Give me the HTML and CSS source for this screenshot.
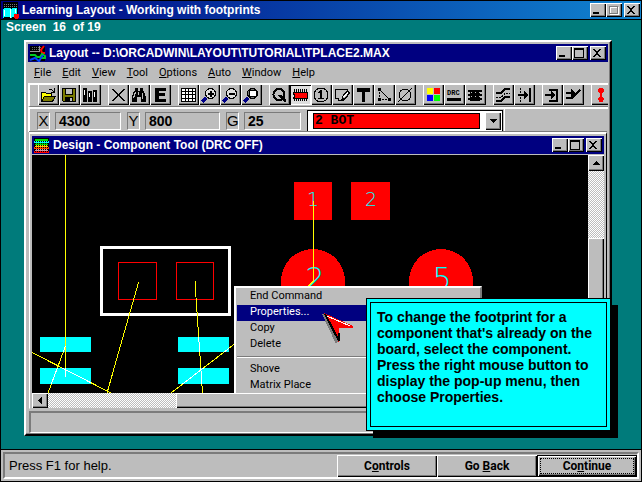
FILE: index.html
```html
<!DOCTYPE html>
<html lang="en">
<head>
<meta charset="utf-8">
<title>Learning Layout - Working with footprints</title>
<link rel="stylesheet" href="styles.css">
</head>
<body>
<main class="lesson">
  <header class="titlebar titlebar-main">
    <svg class="app-icon" width="17" height="17" shape-rendering="crispEdges" aria-hidden="true">
      <path fill="#000" d="M1 0h15v17H1z"/><path stroke="#777" d="M2 2.500h13M2 4.500h13" stroke-dasharray="1 1"/>
      <path fill="#0ff" d="M1 7l2-1h5l1 1v9l-1-1H3l-2 1zM9 7l1-1h5v9h-5l-1 1z"/><path stroke="#fff" d="M8.500 7v9M2.500 8v6M13.500 7v4"/><path fill="#f00" d="M12 12h5v4h-1v1h-3v-1h-1z"/>
    </svg>
    <h1>Learning Layout - Working with footprints</h1>
    <div class="controls">
      <button aria-label="Minimize"><svg width="12" height="10"><path fill="#000" d="M2 7h6v2H2z"/></svg></button>
      <button aria-label="Maximize" disabled><svg width="12" height="10" fill="none" shape-rendering="crispEdges"><path stroke="#fff" d="M3.500 2.500h8v7h-8z"/><path stroke="#7b7b7b" d="M2.500 1.500h8v7h-8z"/></svg></button>
      <button aria-label="Close"><svg width="12" height="10" shape-rendering="crispEdges"><path d="M2 1h2v1h1v1h2V2h1V1h2v1H9v1H8v1H7v2h1v1h1v1h1v1H8V8H7V7H5v1H4v1H2V8h1V7h1V6h1V4H4V3H3V2H2z"/></svg></button>
    </div>
  </header>

  <section class="stage">
    <p class="counter">Screen&nbsp; 16 &nbsp;of 19</p>

    <section class="window">
      <header class="titlebar">
        <svg class="app-icon" width="17" height="17" aria-hidden="true">
          <path fill="#000" d="M1 1h15v15H1z"/><path stroke="#999" d="M1 6.500h9M10.500 1v6"/><path fill="none" stroke="#666" stroke-dasharray="1 1" d="M3 2.500h9M3 4.500h9"/><path fill="none" stroke="#f00" stroke-width="2" d="M15 1l-3 4 1 3h3"/><path fill="none" stroke="#0c2" stroke-width="2" d="M1 10h5l2 2h3l2-3 3 2v2h-4"/><path fill="none" stroke="#04f" stroke-width="2" d="M1 15l5-2 4 3 4-6"/>
        </svg>
        <h2>Layout -- D:\ORCADWIN\LAYOUT\TUTORIAL\TPLACE2.MAX</h2>
        <div class="controls">
          <button aria-label="Minimize"><svg width="12" height="10"><path fill="#000" d="M2 7h6v2H2z"/></svg></button>
          <button aria-label="Maximize"><svg width="12" height="10" shape-rendering="crispEdges"><path fill-rule="evenodd" d="M1 0h10v10H1zM2 2h8v7H2z"/></svg></button>
          <button aria-label="Close"><svg width="12" height="10" shape-rendering="crispEdges"><path d="M2 1h2v1h1v1h2V2h1V1h2v1H9v1H8v1H7v2h1v1h1v1h1v1H8V8H7V7H5v1H4v1H2V8h1V7h1V6h1V4H4V3H3V2H2z"/></svg></button>
        </div>
      </header>

      <nav class="menubar">
        <button><u>F</u>ile</button><button><u>E</u>dit</button><button><u>V</u>iew</button><button><u>T</u>ool</button><button><u>O</u>ptions</button><button><u>A</u>uto</button><button><u>W</u>indow</button><button><u>H</u>elp</button>
      </nav>

      <div class="toolbar">
        <div class="group">
          <button aria-label="Open"><svg><path fill="#7b7b00" d="M2 6h4l1 1h6v3h3l-3 6H2z"/><path fill="#ff0" d="M3 7h3l1 1h5v2H6l-3 5z"/><path fill="none" stroke="#000" d="M2.500 15.500v-9h4l1 1h5v2.500M2.500 15.500l3-5h11l-3 5zM10 3.500h2l3 2M15.500 2v4H12"/></svg></button>
          <button aria-label="Save"><svg><path d="M2 2h14v14H3l-1-1z"/><path fill="#7b7b00" d="M3 3h2v6h8V3h2v12h-2v-4H5v4H3z"/><path fill="#bdbdbd" d="M6 3h6v5H6zM10 12h2v3h-2z"/></svg></button>
          <button aria-label="Library"><svg><path d="M2 2h4v14H2zM7 5h4v11H7zM12 4h4v12h-4z"/><path stroke="#fff" d="M3.500 4v5M8.500 7v4M13.500 6v5"/></svg></button>
        </div>
        <div class="group">
          <button aria-label="Delete"><svg><path d="M2 3h2l5 5 5-5h2l-6 6 6 6h-2l-5-5-5 5H2l6-6z"/></svg></button>
          <button aria-label="Find"><svg><path d="M5 2h3v3h2V2h3v3h1l2 6v5h-5v-5H7v5H2v-5l2-6h1z"/><path stroke="#bdbdbd" d="M5.500 6l-2 6M8.500 6v3M12.500 7v6"/></svg></button>
          <button aria-label="Edit"><svg><path d="M4 2h11v3H8v2h6v3H8v3h7v3H4z"/></svg></button>
        </div>
        <div class="group">
          <button aria-label="Spreadsheet"><svg><path fill="#fff" d="M3 3h13v12H3z"/><path fill="none" stroke="#000" d="M2.500 2.500h14v13h-14zM2 5.500h14M2 8.500h14M2 12.500h14M6.500 2v14M9.500 2v14M13.500 2v14"/></svg></button>
          <button aria-label="Zoom in"><svg><path stroke="#008" stroke-width="3" d="M2 16l4-4"/><circle cx="10.500" cy="7.500" r="5" fill="#ddd" stroke="#000"/><path stroke="#000" stroke-width="2" d="M8 8h6M11 5v6"/></svg></button>
          <button aria-label="Zoom out"><svg><path stroke="#008" stroke-width="3" d="M2 16l4-4"/><circle cx="10.500" cy="7.500" r="5" fill="#ddd" stroke="#000"/><path stroke="#000" stroke-width="2" d="M8 8h6"/></svg></button>
          <button aria-label="Zoom all"><svg><path stroke="#008" stroke-width="3" d="M2 16l4-4"/><circle cx="10.500" cy="7.500" r="5" fill="#777" stroke="#000"/><path fill="#fff" stroke="#000" d="M7.500 4.500h7v6h-7z"/></svg></button>
        </div>
        <div class="group">
          <button aria-label="Query"><svg><circle cx="9" cy="8.500" r="5.500" fill="none" stroke="#000" stroke-width="2"/><path d="M8 9h3l5 5v2h-2z"/></svg></button>
          <button aria-label="Component tool" class="pressed"><svg><path stroke="#000" d="M3.500 3v12M5.500 3v12M7.500 3v12M9.500 3v12M11.500 3v12M13.500 3v12M15.500 3v12"/><path fill="#f00" stroke="#000" d="M2.500 6.500h14v6h-14V11h1V8h-1z"/></svg></button>
          <button aria-label="Pin tool"><svg><circle cx="9" cy="9" r="7" fill="none" stroke="#000"/><path d="M8 4h2v8h2v1H6v-1h2V7H6V6h1z"/></svg></button>
          <button aria-label="Obstacle tool"><svg><path fill="none" stroke="#000" d="M2.500 3.500h12v7l-4 4H5v-2H2.500zM8.500 14l2-5 4-4 2 2-4 5z"/><path fill="#fff" d="M10 11l4-5 1 1-4 5z"/></svg></button>
          <button aria-label="Text tool"><svg><path d="M3 2h13v4h-5v10H8V6H3z"/></svg></button>
          <button aria-label="Connection tool"><svg><path fill="none" stroke="#000" stroke-dasharray="2 1" d="M4.500 3v12M4 13.500h12"/><path stroke="#000" d="M5 4l10 10"/><path d="M3 2h3v3H3zM3 12h3v3H3zM13 12h3v3h-3z"/></svg></button>
          <button aria-label="Error tool"><svg><circle cx="9" cy="9" r="6" fill="none" stroke="#000"/><path stroke="#000" d="M2 16L16 2"/></svg></button>
        </div>
        <div class="group">
          <button aria-label="Colors"><svg><path fill="#ff0" d="M3 2h6v6H3z"/><path fill="#f00" d="M10 2h6v6h-6z"/><path fill="#00f" d="M3 9h6v6H3z"/><path fill="#0f0" d="M10 9h6v6h-6z"/></svg></button>
          <button aria-label="Online DRC"><svg><text x="2" y="9" class="drc">DRC</text><path d="M2 12h14v3H2z"/></svg></button>
          <button aria-label="Reconnect"><svg><path d="M4 4h10v11H4zM2 4h14v2H2zM2 8h14v2H2zM2 12h14v2H2z"/><path stroke="#bdbdbd" stroke-dasharray="1 3" d="M5 6.500h9M5 10.500h9"/></svg></button>
        </div>
        <div class="group">
          <button aria-label="Auto path"><svg><path fill="none" stroke="#000" stroke-width="2" d="M2 7h5l4-4h5M2 15h5l4-4h5"/><path fill="none" stroke="#000" stroke-dasharray="2 1" d="M2 11.500h5l4-4h5"/></svg></button>
          <button aria-label="Shove track"><svg><path stroke="#000" d="M5.500 2v14" stroke-dasharray="2 1"/><path stroke="#000" stroke-width="2" d="M15 2v14M3 9h10"/><path d="M9 5l4 4-4 4z"/></svg></button>
        </div>
        <div class="group">
          <button aria-label="Edit segment"><svg><path fill="none" stroke="#000" stroke-width="2" d="M6 4h8v11H6M2 9h9"/><path d="M8 5l4 4-4 4z"/></svg></button>
          <button aria-label="Add route"><svg><path fill="none" stroke="#000" stroke-width="2" d="M2 12h6l8-8M2 7h8"/><path d="M7 3l4 4-4 4z"/></svg></button>
        </div>
        <div class="group">
          <button aria-label="Refresh"><svg><path fill="#f00" d="M7 2h4v1h1v3h-1v1h-1v4h1v1h1v2h-1v2H7v-2H6v-2h1v-1h1V7H7V6H6V3h1z"/></svg></button>
        </div>
      </div>

      <form class="coords">
        <label for="x">X</label><input id="x" class="field" value="4300">
        <label for="y">Y</label><input id="y" class="field field-y" value="800">
        <label for="g">G</label><input id="g" class="field field-g" value="25">
        <div class="combo">
          <select aria-label="Layer"><option>2 BOT</option></select>
          <span class="arrow"><svg width="7" height="4" shape-rendering="crispEdges"><path d="M0 0h7v1H6v1H5v1H4v1H3V3H2V2H1V1H0z"/></svg></span>
        </div>
        <div class="rest"></div>
      </form>

      <section class="design">
        <header class="titlebar">
          <svg class="app-icon" width="17" height="17" shape-rendering="crispEdges" aria-hidden="true">
            <path fill="#000" d="M1 1h15v15H1z"/>
            <g stroke-width="2"><path stroke="#0d0" d="M2 3h13"/><path stroke="#0ff" d="M1 5h15"/><path stroke="#0d0" d="M2 7h13"/><path stroke="#fc0" d="M2 9h13"/><path stroke="#f40" d="M1 11h15"/><path stroke="#c9a" d="M2 13h13"/><path stroke="#f00" d="M1 15h15"/></g>
            <path stroke="#000" stroke-dasharray="1 1" d="M2 4.500h13M2 6.500h13M2 8.500h13M2 10.500h13M2 12.500h13M2 14.500h13"/>
          </svg>
          <h2>Design - Component Tool (DRC OFF)</h2>
          <div class="controls">
            <button aria-label="Minimize"><svg width="12" height="10"><path fill="#000" d="M2 7h6v2H2z"/></svg></button>
            <button aria-label="Maximize"><svg width="12" height="10" shape-rendering="crispEdges"><path fill-rule="evenodd" d="M1 0h10v10H1zM2 2h8v7H2z"/></svg></button>
            <button aria-label="Close"><svg width="12" height="10" shape-rendering="crispEdges"><path d="M2 1h2v1h1v1h2V2h1V1h2v1H9v1H8v1H7v2h1v1h1v1h1v1H8V8H7V7H5v1H4v1H2V8h1V7h1V6h1V4H4V3H3V2H2z"/></svg></button>
          </div>
        </header>

        <div class="viewport">
          <div class="board">
            <svg class="drawing" shape-rendering="crispEdges">
              <defs><clipPath id="pads"><path d="M40 346h51v6H40zM40 368h51v16H40zM178 337h51v15h-51zM178 368h51v16h-51z"/></clipPath></defs>
              <g transform="translate(-32 -155)">
                <path fill="#f00" d="M294 182h38v38h-38zM351 182h39v38h-39z"/>
                <circle cx="313" cy="281" r="32" fill="#f00"/><circle cx="441" cy="281" r="32" fill="#f00"/>
                <g class="pin"><text x="313" y="206">1</text><text x="371" y="206">2</text></g>
                <g class="pin pin-large"><text x="315" y="289">2</text><text x="442" y="289">5</text></g>
                <path fill="#0ff" d="M40 337h51v15H40zM40 368h51v16H40zM178 337h51v15h-51zM178 368h51v16h-51z"/>
                <path fill="none" stroke="#fff" stroke-width="3" d="M101.500 247.500h128v67h-128z"/>
                <path fill="none" stroke="#f00" d="M118.500 262.500h38v37h-38zM176.500 262.500h37v37h-37z"/>
                <g fill="none">
                  <path stroke="#ff0" d="M65.500 155v222M313.500 201v80l-6 6M138.500 282.500L107 393M195.500 281v9L202.500 393M32 352.500L111 393M65.500 346L48 393M171 393L234.500 344"/>
                  <path stroke="#fff" clip-path="url(#pads)" d="M65.500 368v9M195.500 281v9L202.500 393M32 352.500L111 393M65.500 346L48 393M171 393L234.500 344"/>
                </g>
              </g>
            </svg>
            <menu class="popup">
              <li><button>End Command</button></li>
              <li><button class="selected">Properties...</button></li>
              <li><button>Copy</button></li>
              <li><button>Delete</button></li>
              <li class="separator"></li>
              <li><button>Shove</button></li>
              <li><button>Matrix Place</button></li>
            </menu>
            <svg class="pointer" width="33" height="33" shape-rendering="crispEdges" aria-hidden="true">
              <path fill="#7b7b7b" d="M0 2l3-1 13 28-2 3z"/>
              <path fill="#f00" d="M2 1l29 13v2H17v15z"/>
              <path fill="none" stroke="#000" stroke-width="2" d="M3 2l14 27V21"/>
              <path stroke="#fff" d="M5 4l23 10"/>
            </svg>
          </div>
          <div class="vscroll">
            <span class="arrow"><svg width="7" height="4" shape-rendering="crispEdges"><path d="M3 0h1v1h1v1h1v1h1v1H0V3h1V2h1V1h1z"/></svg></span>
            <span class="thumb"></span>
          </div>
          <div class="hscroll">
            <span class="arrow"><svg width="4" height="7" shape-rendering="crispEdges"><path d="M4 0v7H3V6H2V5H1V4H0V3h1V2h1V1h1V0z"/></svg></span>
            <span class="thumb"></span>
          </div>
        </div>
      </section>
      <div class="window-status"></div>
    </section>

    <aside class="callout"><p>To change the footprint for a component that's already on the board, select the component. Press the right mouse button to display the pop-up menu, then choose Properties.</p></aside>
  </section>

  <footer class="statusbar">
    <div class="status-panel">
      <p>Press F1 for help.</p>
      <button>C<u>o</u>ntrols</button>
      <button>Go <u>B</u>ack</button>
      <button class="default"><span>Co<u>n</u>tinue</span></button>
    </div>
  </footer>
</main>
</body>
</html>
```

FILE: styles.css
```css
:root {
  --face: #bdbdbd;
  --shade: #7b7b7b;
  --teal: #007b7b;
  --navy: #000080;
}

* { box-sizing: border-box; }

body {
  margin: 0;
  font: 12px/16px "Liberation Sans", Arial, sans-serif;
  color: #000;
  background: #000;
}

h1, h2, p, menu { margin: 0; padding: 0; }

button {
  margin: 0;
  padding: 0;
  border: 0;
  border-radius: 0;
  background: var(--face);
  color: #000;
  font: inherit;
}

.lesson {
  display: flex;
  flex-direction: column;
  min-height: 100vh;
  border: 1px solid #000;
}

/* Title bars */
.titlebar {
  display: flex;
  align-items: center;
  flex: none;
  height: 18px;
  padding: 0 2px 0 1px;
  background: var(--navy);
  color: #fff;
}

.titlebar-main {
  padding: 0 1px;
  background: linear-gradient(90deg, #000080, #1084d0);
}

.titlebar h1, .titlebar h2 {
  flex: 1;
  padding-left: 3px;
  font-size: 12px;
  font-weight: bold;
  line-height: 18px;
  white-space: nowrap;
}

.controls { display: flex; }
.controls button, .arrow, .thumb {
  box-shadow: inset 1px 1px #fff, inset -1px -1px #000, inset -2px -2px var(--shade);
  background: var(--face);
}
.controls button { width: 16px; height: 14px; padding: 2px 1px; }
.controls svg { display: block; }
.controls button:last-child { margin-left: 2px; }

/* Lesson area */
.stage {
  position: relative;
  display: flex;
  flex-direction: column;
  flex: 1;
  padding: 0 29px 13px 23px;
  border-top: 1px solid #000;
  background: var(--teal);
}

.counter {
  height: 20px;
  margin-left: -18px;
  color: #fff;
  font-size: 12px;
  font-weight: bold;
  line-height: 14px;
}

.window {
  display: flex;
  flex-direction: column;
  flex: 1;
  padding: 2px 2px 1px;
  border: 2px solid;
  border-color: #fff #000 #000 #fff;
  background: var(--face);
  box-shadow: inset -1px -1px var(--shade);
}

.menubar {
  display: flex;
  gap: 11px;
  height: 21px;
  padding: 0 6px;
}
.menubar button {
  font-family: Roboto, "Liberation Sans", sans-serif;
  font-size: 11px;
}

.toolbar {
  display: flex;
  gap: 7px;
  height: 24px;
  padding: 0 0 0 8px;
  border-top: 2px solid #fff;
  border-left: 2px solid #fff;
  border-bottom: 1px solid var(--shade);
  overflow: hidden;
}
.group { display: flex; flex: none; }
.toolbar button {
  width: 21px;
  height: 20px;
  box-shadow: inset 1px 0 #fff, inset -1px -1px #000, inset -2px -2px var(--shade);
}
.toolbar .pressed { box-shadow: inset 1px 1px #000, inset -1px -1px #fff; background: #dedede; }
.toolbar svg { display: block; width: 18px; height: 18px; margin-left: 1px; shape-rendering: crispEdges; }
.drc { font: bold 7px "Liberation Mono", monospace; }

/* Coordinates and layer */
.coords {
  display: flex;
  align-items: center;
  height: 25px;
  border-top: 2px solid #fff;
  border-left: 2px solid #fff;
  padding-left: 7px;
}
.coords label, .field {
  height: 18px;
  border: 1px solid;
  border-color: var(--shade) #fff #fff var(--shade);
  font: 15px/16px "Liberation Sans", Arial, sans-serif;
}
.coords label { width: 13px; margin-right: 5px; text-align: center; }
.field {
  width: 66px;
  margin-right: 6px;
  padding: 0 3px;
  background: none;
  border-radius: 0;
  font-size: 14px;
  font-weight: bold;
}
.field-y { width: 75px; }
.field-g { width: 57px; }
.combo {
  display: flex;
  align-items: center;
  width: 196px;
  height: 22px;
  padding: 0 1px 0 5px;
  border: 1px solid #000;
  background: #fff;
}
.combo select {
  appearance: none;
  flex: 1;
  height: 16px;
  margin-right: 5px;
  padding: 0 1px;
  border: 1px solid #000;
  border-radius: 0;
  background: #f00;
  color: #000;
  font: bold 13px/14px "Liberation Mono", monospace;
}
.arrow {
  display: flex;
  align-items: center;
  justify-content: center;
  flex: none;
  width: 16px;
  height: 16px;
}
.combo .arrow { height: 18px; }
.rest { flex: 1; align-self: stretch; margin-left: 1px; border-left: 1px solid #fff; }

/* Design window */
.design {
  display: flex;
  flex-direction: column;
  flex: 1;
  margin: 0 1px;
  padding: 2px 2px 0;
  border: 1px solid;
  border-top: 2px solid #fff;
  border-color: #fff #000 var(--face) #fff;
  box-shadow: 0 -1px var(--shade);
}
.viewport {
  display: grid;
  flex: 1;
  grid-template: 1fr 15px / 1fr 16px;
  border-top: 1px solid var(--face);
}
.board {
  position: relative;
  overflow: hidden;
  background: #000;
}
.drawing { position: absolute; width: 100%; height: 100%; }
.pin {
  fill: #0ff;
  font: 200 19px "DejaVu Sans", sans-serif;
  text-anchor: middle;
}
.pin-large { font-size: 30px; }

.vscroll, .hscroll {
  display: flex;
  background: repeating-conic-gradient(#fff 0 25%, var(--face) 0 50%) 0 0 / 2px 2px;
}
.vscroll { flex-direction: column; }
.vscroll .thumb { height: 80px; margin-top: 67px; }
.hscroll .arrow { height: 15px; }
.hscroll .thumb { width: 240px; margin-left: 128px; }

.popup {
  position: absolute;
  left: 202px;
  top: 131px;
  width: 248px;
  padding: 1px 1px 16px;
  border: 2px solid;
  border-color: #fff var(--shade) var(--shade) #fff;
  background: var(--face);
  list-style: none;
}
.popup button {
  display: block;
  width: 100%;
  height: 16px;
  padding: 0 0 2px 13px;
  font: 11px/14px Roboto, "Liberation Sans", sans-serif;
  text-align: left;
}
.popup .selected { background: var(--navy); color: #fff; }
.separator {
  height: 2px;
  margin: 3px 0 4px;
  border-top: 1px solid var(--shade);
  border-bottom: 1px solid #fff;
}
.pointer { position: absolute; left: 290px; top: 157px; }

.window-status {
  height: 22px;
  margin: 2px 1px 0;
  border: 1px solid;
  border-width: 2px 1px 1px 2px;
  border-color: var(--shade) #fff #fff var(--shade);
}

/* Instruction balloon */
.callout {
  position: absolute;
  left: 365px;
  top: 278px;
  width: 245px;
  height: 133px;
  padding: 3px;
  border: 1px solid #000;
  background: #0ff;
  box-shadow: 7px 7px #000;
}
.callout p {
  height: 100%;
  padding: 6px 0 0 6px;
  border: 1px solid #000;
  font-size: 14px;
  font-weight: bold;
  line-height: 16px;
}

/* Lesson status bar */
.statusbar {
  padding: 2px;
  border-top: 1px solid #000;
  background: var(--face);
}
.status-panel {
  display: flex;
  align-items: center;
  height: 27px;
  border: 2px solid;
  border-color: var(--shade) #fff #fff var(--shade);
}
.status-panel p { flex: 1; padding-left: 4px; font-size: 13px; }
.status-panel button {
  width: 100px;
  height: 22px;
  box-shadow: inset 1px 1px #fff, inset -1px -1px #000, inset -2px -2px var(--shade);
  font-family: Roboto, "Liberation Sans", sans-serif;
  font-weight: bold;
}
.status-panel .default {
  padding: 2px;
  border: 1px solid #000;
}
.default span {
  display: block;
  height: 16px;
  border: 1px dotted #000;
  line-height: 14px;
}
```
